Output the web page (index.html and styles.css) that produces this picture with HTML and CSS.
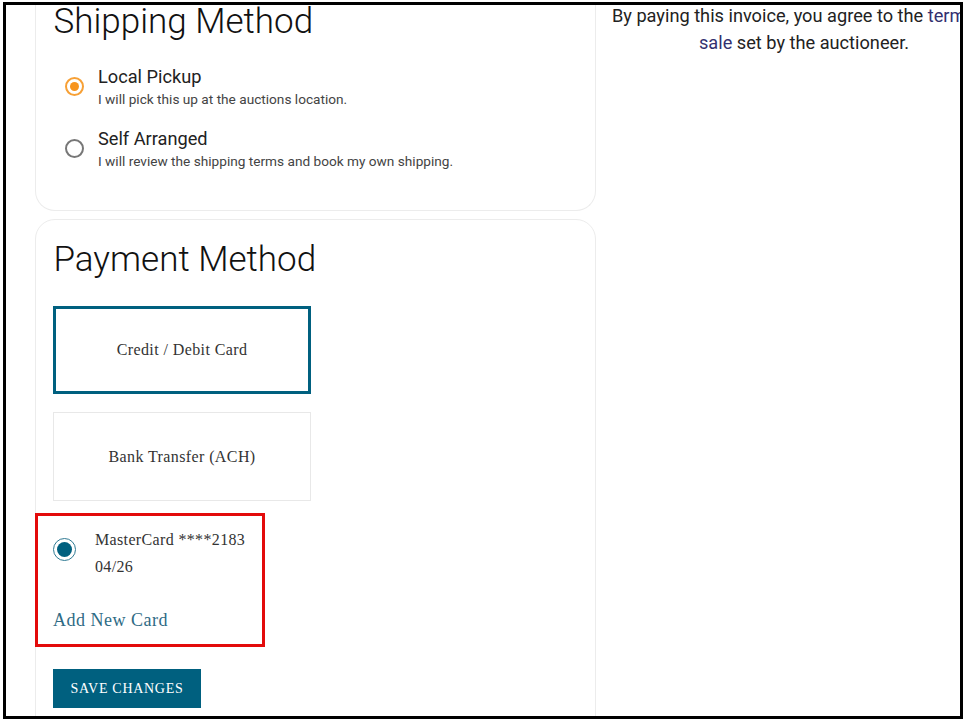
FILE: index.html
```html
<!DOCTYPE html>
<html lang="en">
<head>
  <meta charset="UTF-8">
  <title>Invoice</title>
  <link rel="stylesheet" href="styles.css">
</head>
<body>
  <div class="frame">
    <div class="main-col">
      <section class="card card-shipping">
        <h2>Shipping Method</h2>
        <div class="ship-option">
          <span class="radio radio-orange"></span>
          <div>
            <div class="ship-title">Local Pickup</div>
            <div class="ship-note">I will pick this up at the auctions location.</div>
          </div>
        </div>
        <div class="ship-option">
          <span class="radio"></span>
          <div>
            <div class="ship-title">Self Arranged</div>
            <div class="ship-note">I will review the shipping terms and book my own shipping.</div>
          </div>
        </div>
      </section>

      <section class="card card-payment">
        <h2>Payment Method</h2>
        <div class="pay-tab pay-tab-active">Credit / Debit Card</div>
        <div class="pay-tab">Bank Transfer (ACH)</div>
        <div class="saved-box">
          <div class="saved-card">
            <span class="radio radio-teal"></span>
            <div class="saved-text">
              <div>MasterCard ****2183</div>
              <div>04/26</div>
            </div>
          </div>
          <a class="add-card" href="#">Add New Card</a>
        </div>
        <button class="save-btn">SAVE CHANGES</button>
      </section>
    </div>

    <aside class="side-col">
      <p>By paying this invoice, you agree to the <a href="#">terms of sale</a> set by the auctioneer.</p>
    </aside>
  </div>
</body>
</html>
```

FILE: styles.css
```css
body {
  margin: 0;
  background-color: #fff;
  font-family: 'Roboto', 'Liberation Sans', sans-serif;
  color: #222;
}

.frame {
  box-sizing: border-box;
  width: 960px;
  height: 717px;
  margin: 2px 0 0 3px;
  border: 3px solid #000;
  display: flex;
  overflow: hidden;
  background-color: #fff;
}

.main-col {
  width: 561px;
  margin-left: 29px;
  flex-shrink: 0;
}

.card {
  box-sizing: border-box;
  border: 1px solid #ececec;
  border-radius: 20px;
  padding: 0 17px;
}

.card-shipping {
  height: 210px;
  border-top: none;
  border-top-left-radius: 0;
  border-top-right-radius: 0;
  margin-bottom: 8px;
}

.card-payment {
  height: 520px;
  padding-top: 19px;
}

h2 {
  margin: 0;
  padding-left: 0.5px;
  font-size: 35px;
  font-weight: 300;
  line-height: 42px;
  color: #111;
}

.card-shipping h2 {
  margin-top: -4px;
  margin-bottom: 13px;
}

.ship-option {
  display: flex;
  align-items: center;
  gap: 14px;
  height: 62px;
  padding-left: 12px;
}

.ship-option .radio {
  margin-top: -1px;
}

.ship-title {
  font-size: 18.2px;
  line-height: 24px;
  color: #222;
}

.ship-note {
  margin-top: -1px;
  font-size: 13.65px;
  line-height: 22px;
  color: #444;
}

.radio {
  box-sizing: border-box;
  width: 19px;
  height: 19px;
  border: 2px solid #777;
  border-radius: 50%;
  flex-shrink: 0;
  display: flex;
  align-items: center;
  justify-content: center;
}

.radio-orange {
  border-color: #f7a035;
}

.radio-orange::after {
  content: "";
  width: 9px;
  height: 9px;
  border-radius: 50%;
  background-color: #f7941d;
}

.radio-teal {
  width: 23px;
  height: 23px;
  margin-top: 12px;
  border: 1px solid #2f7a93;
}

.radio-teal::after {
  content: "";
  width: 15px;
  height: 15px;
  border-radius: 50%;
  background-color: #00607f;
}

.pay-tab {
  box-sizing: border-box;
  width: 258px;
  height: 89px;
  margin-top: 18px;
  border: 1px solid #e8e8e8;
  display: flex;
  align-items: center;
  justify-content: center;
  font-family: 'Liberation Serif', serif;
  font-size: 16px;
  letter-spacing: 0.4px;
  color: #333;
}

.pay-tab-active {
  height: 88px;
  margin-top: 25px;
  border: 3px solid #00607f;
}

.saved-box {
  box-sizing: border-box;
  width: 230px;
  height: 134px;
  margin: 12px 0 0 -18px;
  border: 3px solid #e30b0b;
  padding: 10px 0 0 15px;
  font-family: 'Liberation Serif', serif;
}

.saved-card {
  display: flex;
  align-items: flex-start;
  gap: 19px;
  height: 62px;
}

.saved-text {
  font-size: 16px;
  line-height: 27px;
  letter-spacing: 0.35px;
  color: #333;
}

.add-card {
  display: block;
  margin-top: 20px;
  font-size: 18px;
  line-height: 24px;
  letter-spacing: 0.5px;
  color: #2f6b85;
  text-decoration: none;
}

.save-btn {
  display: block;
  width: 148px;
  height: 39px;
  margin-top: 22px;
  border: none;
  background-color: #00607f;
  color: #fff;
  font-family: 'Liberation Serif', serif;
  font-size: 14px;
  letter-spacing: 0.7px;
}

.side-col {
  width: 400px;
  margin-left: 8px;
  flex-shrink: 0;
}

.side-col p {
  margin: -3px 0 0;
  text-align: center;
  font-size: 18.2px;
  line-height: 27px;
  color: #222;
}

.side-col a {
  color: #33306f;
  text-decoration: none;
}
```
